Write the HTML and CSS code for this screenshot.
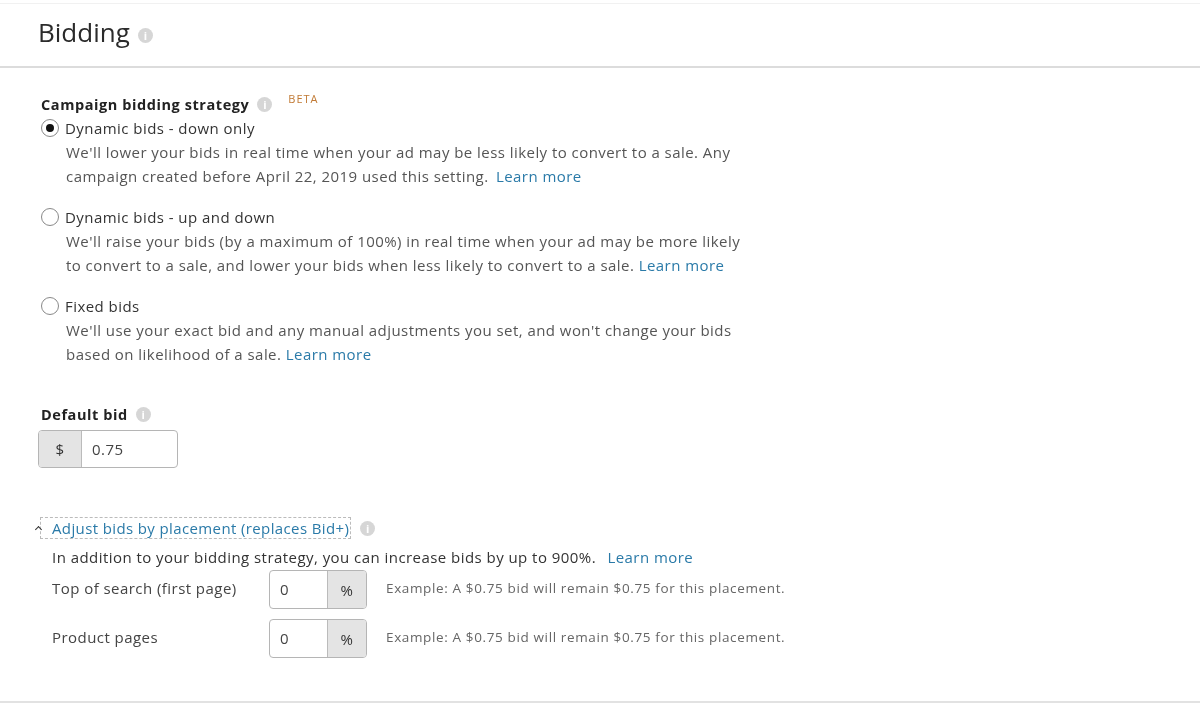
FILE: index.html
```html
<!DOCTYPE html>
<html lang="en">
<head>
    <meta charset="UTF-8">
    <title>Bidding</title>
    <link rel="stylesheet" href="styles.css">
</head>
<body>

<div class="panel">
    <div class="panel-head">
        <h1>Bidding</h1>
        <span class="info">i</span>
    </div>

    <div class="panel-body">
        <div class="label-row">
            <span class="label">Campaign bidding strategy</span>
            <span class="info">i</span>
            <span class="beta">BETA</span>
        </div>

        <div class="options">
            <div class="option">
                <div class="option-title"><span class="radio radio-on"></span>Dynamic bids - down only</div>
                <p>We'll lower your bids in real time when your ad may be less likely to convert to a sale. Any<br>
                campaign created before April 22, 2019 used this setting. <a href="#" class="gap">Learn more</a></p>
            </div>
            <div class="option">
                <div class="option-title"><span class="radio"></span>Dynamic bids - up and down</div>
                <p>We'll raise your bids (by a maximum of 100%) in real time when your ad may be more likely<br>
                to convert to a sale, and lower your bids when less likely to convert to a sale. <a href="#">Learn more</a></p>
            </div>
            <div class="option">
                <div class="option-title"><span class="radio"></span>Fixed bids</div>
                <p>We'll use your exact bid and any manual adjustments you set, and won't change your bids<br>
                based on likelihood of a sale. <a href="#">Learn more</a></p>
            </div>
        </div>

        <div class="label-row default-bid">
            <span class="label">Default bid</span>
            <span class="info">i</span>
        </div>
        <div class="input-group bid-input">
            <span class="addon addon-left">$</span>
            <span class="value">0.75</span>
        </div>

        <div class="placement-head">
            <span class="caret"></span>
            <a href="#" class="placement-link">Adjust bids by placement (replaces Bid+)</a>
            <span class="info">i</span>
        </div>
        <div class="placement">
            <div class="placement-intro">In addition to your bidding strategy, you can increase bids by up to 900%. <a href="#">Learn more</a></div>
            <div class="placement-row">
                <span class="row-name">Top of search (first page)</span>
                <div class="input-group pct-input">
                    <span class="value">0</span>
                    <span class="addon addon-right">%</span>
                </div>
                <span class="example">Example: A $0.75 bid will remain $0.75 for this placement.</span>
            </div>
            <div class="placement-row">
                <span class="row-name">Product pages</span>
                <div class="input-group pct-input">
                    <span class="value">0</span>
                    <span class="addon addon-right">%</span>
                </div>
                <span class="example">Example: A $0.75 bid will remain $0.75 for this placement.</span>
            </div>
        </div>
    </div>
</div>

</body>
</html>
```

FILE: styles.css
```css
* {
    box-sizing: border-box;
}
body {
    margin: 0;
    background-color: #fff;
    color: #333;
    font-family: "Open Sans", "Liberation Sans", sans-serif;
    font-size: 15px;
    letter-spacing: 0.45px;
}
a {
    color: #2a7aa8;
    text-decoration: none;
}
.panel {
    height: 700px;
    margin-top: 3px;
    border-top: 1px solid #f1f1f1;
    border-bottom: 2px solid #e2e2e2;
    filter: blur(0.4px);
}
.panel-head {
    display: flex;
    align-items: center;
    height: 64px;
    padding-left: 38px;
    border-bottom: 2px solid #dcdcdc;
}
h1 {
    margin: 0 8px 6px 0;
    font-size: 26px;
    font-weight: 400;
    letter-spacing: 0;
    color: #2b2b2b;
}
.info {
    display: inline-block;
    width: 15px;
    height: 15px;
    border-radius: 50%;
    background-color: #d6d6d6;
    color: #fff;
    font-size: 11px;
    font-weight: 700;
    line-height: 15px;
    letter-spacing: 0;
    text-align: center;
}
.panel-body {
    padding: 25px 0 0 41px;
}
.label-row {
    display: flex;
    align-items: center;
    height: 22px;
}
.label {
    font-size: 14.5px;
    font-weight: 700;
    letter-spacing: 0.57px;
    color: #222;
    margin-right: 8px;
}
.beta {
    align-self: flex-start;
    margin: -2px 0 0 16px;
    font-size: 11px;
    letter-spacing: 1px;
    color: #c17a35;
}
.options {
    margin-top: 1px;
}
.option {
    margin-bottom: 17px;
}
.option-title {
    display: flex;
    align-items: center;
    height: 24px;
    color: #333;
}
.radio {
    width: 18px;
    height: 18px;
    margin-right: 6px;
    border: 1px solid #888;
    border-radius: 50%;
    background-color: #fff;
}
.radio-on {
    border: 5px solid #fff;
    outline: 1px solid #888;
    outline-offset: -1px;
    background-color: #111;
}
.option p {
    margin: 0 0 0 25px;
    line-height: 24px;
    color: #555;
}
.gap {
    margin-left: 3px;
}
.default-bid {
    margin-top: 37px;
}
.input-group {
    display: flex;
    border: 1px solid #b5b5b5;
    border-radius: 4px;
    background-color: #fff;
}
.bid-input {
    width: 140px;
    height: 38px;
    margin: 5px 0 0 -3px;
}
.pct-input {
    width: 98px;
    height: 39px;
}
.addon {
    display: flex;
    align-items: center;
    justify-content: center;
    background-color: #e4e4e4;
}
.addon-left {
    width: 43px;
    border-right: 1px solid #bbb;
    border-radius: 3px 0 0 3px;
}
.addon-right {
    width: 39px;
    border-left: 1px solid #bbb;
    border-radius: 0 3px 3px 0;
}
.value {
    flex: 1;
    padding-left: 10px;
    line-height: 36px;
    color: #444;
}
.placement-head {
    display: flex;
    align-items: center;
    margin: 49px 0 0 -5px;
    height: 22px;
}
.caret {
    width: 5px;
    height: 5px;
    margin: 2px -1px 0 0;
    border-top: 1px solid #333;
    border-left: 1px solid #333;
    transform: rotate(45deg);
}
.placement-link {
    padding: 0 1px 0 11px;
    margin-right: 9px;
    border: 1px dashed #bbb;
    letter-spacing: 0.38px;
    line-height: 20px;
}
.placement {
    padding-left: 11px;
}
.placement-intro {
    margin: 8px 0 3px;
    line-height: 20px;
    color: #333;
}
.placement-intro a {
    margin-left: 7px;
}
.placement-row {
    display: flex;
    align-items: center;
    height: 39px;
    margin-bottom: 10px;
}
.row-name {
    width: 217px;
    padding-bottom: 3px;
    color: #444;
}
.example {
    margin-left: 19px;
    padding-bottom: 3px;
    font-size: 13.5px;
    letter-spacing: 0.63px;
    color: #666;
}
```
